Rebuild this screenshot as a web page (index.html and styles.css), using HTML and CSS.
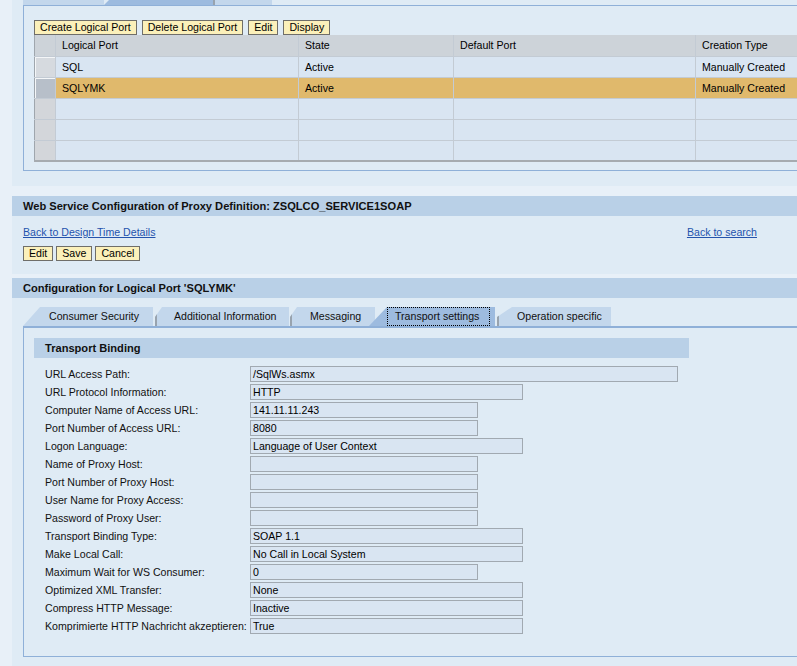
FILE: index.html
```html
<!DOCTYPE html>
<html>
<head>
<meta charset="utf-8">
<link rel="stylesheet" href="styles.css">
</head>
<body>
<div class="page">
  <section class="panel top">
    <div class="toptabs">
      <div class="ttab ta"></div>
      <div class="ttab tb"></div>
      <div class="ttab tc"></div>
    </div>
    <div class="topbox">
      <div class="btnrow wide">
        <button class="btn">Create Logical Port</button>
        <button class="btn">Delete Logical Port</button>
        <button class="btn">Edit</button>
        <button class="btn">Display</button>
      </div>
      <table class="grid">
        <colgroup>
          <col class="c0"><col class="c1"><col class="c2"><col class="c3"><col class="c4">
        </colgroup>
        <tr class="head"><td class="sel"></td><td>Logical Port</td><td>State</td><td>Default Port</td><td>Creation Type</td></tr>
        <tr class="row"><td class="sel raised"></td><td>SQL</td><td>Active</td><td></td><td>Manually Created</td></tr>
        <tr class="row picked"><td class="sel raised dark"></td><td>SQLYMK</td><td>Active</td><td></td><td>Manually Created</td></tr>
        <tr class="row"><td class="sel"></td><td></td><td></td><td></td><td></td></tr>
        <tr class="row"><td class="sel"></td><td></td><td></td><td></td><td></td></tr>
        <tr class="row last"><td class="sel"></td><td></td><td></td><td></td><td></td></tr>
      </table>
    </div>
  </section>

  <section class="titled">
    <div class="bar">Web Service Configuration of Proxy Definition: ZSQLCO_SERVICE1SOAP</div>
    <div class="panel body2">
      <div class="links">
        <a href="#" class="lnk">Back to Design Time Details</a>
        <a href="#" class="lnk right">Back to search</a>
      </div>
      <div class="btnrow narrow">
        <button class="btn">Edit</button>
        <button class="btn">Save</button>
        <button class="btn">Cancel</button>
      </div>
    </div>
  </section>

  <section class="titled">
    <div class="bar">Configuration for Logical Port 'SQLYMK'</div>
    <div class="panel body3">
      <div class="tabs">
        <div class="tab t1">Consumer Security</div>
        <div class="tab t2 notch">Additional Information</div>
        <div class="tab t3 notch">Messaging</div>
        <div class="tab t4 active"><span class="focus">Transport settings</span></div>
        <div class="tab t5 notch longslant">Operation specific</div>
      </div>
      <div class="tabbox">
        <div class="subbar">Transport Binding</div>
        <div class="form">
          <div class="frow"><label>URL Access Path:</label><div class="inp long">/SqlWs.asmx</div></div>
          <div class="frow"><label>URL Protocol Information:</label><div class="inp mid">HTTP</div></div>
          <div class="frow"><label>Computer Name of Access URL:</label><div class="inp short">141.11.11.243</div></div>
          <div class="frow"><label>Port Number of Access URL:</label><div class="inp short">8080</div></div>
          <div class="frow"><label>Logon Language:</label><div class="inp mid">Language of User Context</div></div>
          <div class="frow"><label>Name of Proxy Host:</label><div class="inp short"></div></div>
          <div class="frow"><label>Port Number of Proxy Host:</label><div class="inp short"></div></div>
          <div class="frow"><label>User Name for Proxy Access:</label><div class="inp short"></div></div>
          <div class="frow"><label>Password of Proxy User:</label><div class="inp short"></div></div>
          <div class="frow"><label>Transport Binding Type:</label><div class="inp mid">SOAP 1.1</div></div>
          <div class="frow"><label>Make Local Call:</label><div class="inp mid">No Call in Local System</div></div>
          <div class="frow"><label>Maximum Wait for WS Consumer:</label><div class="inp short">0</div></div>
          <div class="frow"><label>Optimized XML Transfer:</label><div class="inp mid">None</div></div>
          <div class="frow"><label>Compress HTTP Message:</label><div class="inp mid">Inactive</div></div>
          <div class="frow"><label>Komprimierte HTTP Nachricht akzeptieren:</label><div class="inp mid">True</div></div>
        </div>
      </div>
    </div>
  </section>
</div>
</body>
</html>
```

FILE: styles.css
```css
html, body {
  margin: 0;
  padding: 0;
  background: #e8f0f8;
  overflow: hidden;
}
body {
  width: 797px;
  height: 666px;
  font-family: "Liberation Sans", Arial, sans-serif;
  font-size: 10.6px;
  color: #000;
}
.page {
  padding-left: 12px;
  width: 785px;
  overflow: hidden;
}
.panel {
  background: #dfebf5;
}
.top {
  height: 186px;
  box-sizing: border-box;
  padding-left: 11px;
  overflow: hidden;
}
.toptabs {
  display: flex;
  height: 5px;
}
.ttab {
  height: 5px;
  flex: none;
  box-sizing: border-box;
}
.ta { width: 81px; background: #c3d7ec; }
.tb { width: 109px; background: #9dbbdf; clip-path: polygon(0 100%, 5px 0, 100% 0, 100% 100%); }
.tc { width: 59px; background: #c3d7ec; border-left: 2px solid #98a3ae; }

.topbox {
  border-top: 1px solid #8fb0d8;
  border-left: 1px solid #8fb0d8;
  border-bottom: 1px solid #8fb0d8;
  padding: 14px 0 8px 10px;
}
.btnrow {
  display: flex;
  height: 15px;
}
.wide { gap: 5px; }
.narrow { gap: 3px; margin-top: 7px; }
.btn {
  font-family: "Liberation Sans", Arial, sans-serif;
  font-size: 10.6px;
  color: #000;
  height: 15px;
  line-height: 13px;
  padding: 0 5px;
  margin: 0;
  border: 1px solid #6f6e69;
  background: #fbf0ba;
  border-radius: 0;
}
.grid {
  border-collapse: collapse;
  table-layout: fixed;
  width: 781px;
}
.c0 { width: 21px; }
.c1 { width: 243px; }
.c2 { width: 155px; }
.c3 { width: 242px; }
.c4 { width: 120px; }
.grid td {
  height: 21px;
  padding: 0 0 0 6px;
  border-right: 1px solid #c3cbd4;
  border-bottom: 1px solid #c3cbd4;
  white-space: nowrap;
  overflow: hidden;
  vertical-align: middle;
  line-height: 20px;
  box-sizing: border-box;
}
.grid tr.head td {
  background: #cdd3d9;
  border-bottom-color: #c3cbd4;
}
.grid tr.row td {
  background: #d9e5f2;
}
.grid tr.picked td {
  background: #e0b96c;
}
.grid td.sel {
  padding: 0;
  border-left: 1px solid #9fa6ad;
  border-right: 1px solid #c3cbd4;
}
.grid tr.row td.sel {
  background: #d3d6da;
}
.grid tr.row td.sel.raised {
  background: #d6dadf;
  box-shadow: inset 1px 1px 0 #f4f6f8;
}
.grid tr.row td.sel.raised.dark {
  background: #b7bfc9;
}
.grid tr.last td {
  border-bottom: 2px solid #a6abb0;
}

.titled {
  margin-top: 10px;
}
.titled + .titled {
  margin-top: 4px;
}
.bar {
  height: 20px;
  line-height: 20px;
  background: #b9d0e7;
  padding-left: 11px;
  font-weight: bold;
  font-size: 11.1px;
  color: #111;
  white-space: nowrap;
}
.body2 {
  height: 58px;
  box-sizing: border-box;
  padding: 9px 0 0 11px;
}
.links {
  display: flex;
  height: 14px;
  line-height: 14px;
}
.lnk {
  color: #2453ad;
  text-decoration: underline;
}
.lnk.right {
  margin-left: auto;
  margin-right: 40px;
}

.body3 {
  height: 380px;
  box-sizing: border-box;
  padding: 9px 0 0 11px;
}
.tabs {
  display: flex;
  height: 19px;
}
.tab {
  flex: none;
  height: 19px;
  line-height: 19px;
  box-sizing: border-box;
  background: #c3d7ec;
  white-space: nowrap;
  color: #111;
}
.t1 {
  width: 130px;
  padding-left: 26px;
  clip-path: polygon(0 100%, 17px 0, 100% 0, 100% 100%);
}
.notch {
  border-left: 2px solid #98a3ae;
  clip-path: polygon(0 100%, 0 10px, 7px 0, 100% 0, 100% 100%);
}
.longslant {
  clip-path: polygon(0 100%, 0 10px, 15px 0, 100% 0, 100% 100%);
}
.t2 { margin-left: 2px; width: 134px; padding-left: 17px; }
.t3 { margin-left: 1px; width: 85px; padding-left: 18px; }
.t4 {
  margin-left: -6px;
  width: 126px;
  background: #9dbbdf;
  clip-path: polygon(0 100%, 18px 0, 100% 0, 100% 100%);
}
.focus {
  display: block;
  margin-left: 18px;
  width: 103px;
  height: 19px;
  box-sizing: border-box;
  border: 1px dotted #000;
  padding-left: 7px;
  line-height: 17px;
}
.t5 { margin-left: 2px; width: 114px; padding-left: 18px; }

.tabbox {
  border-top: 2px solid #8fb0d8;
  border-left: 1px solid #8fb0d8;
  border-bottom: 1px solid #8fb0d8;
  padding: 10px 0 22px 10px;
}
.subbar {
  width: 655px;
  height: 20px;
  line-height: 20px;
  background: #b9d0e7;
  padding-left: 11px;
  box-sizing: border-box;
  font-weight: bold;
  font-size: 11.1px;
  color: #111;
}
.form {
  margin-top: 8px;
  display: flex;
  flex-direction: column;
  gap: 2px;
}
.frow {
  display: flex;
  height: 16px;
}
.frow label {
  width: 216px;
  padding-left: 11px;
  box-sizing: border-box;
  line-height: 16px;
  white-space: nowrap;
  color: #111;
}
.inp {
  height: 16px;
  box-sizing: border-box;
  border: 1px solid #a1a9b1;
  background: #d9e5f2;
  padding-left: 2px;
  line-height: 14px;
  white-space: nowrap;
}
.long { width: 428px; }
.mid { width: 273px; }
.short { width: 228px; }
```
